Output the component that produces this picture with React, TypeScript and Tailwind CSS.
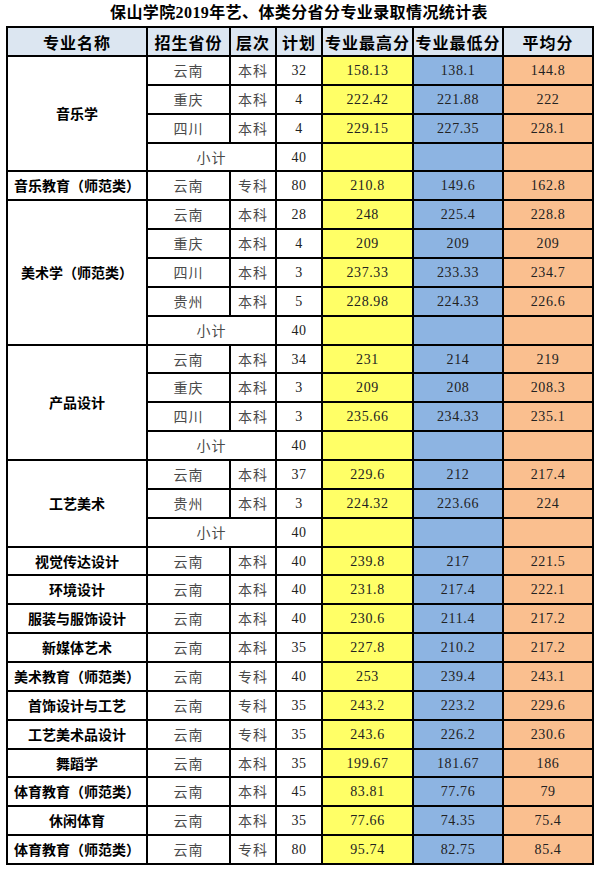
import React from "react"

type Row = { prov: string; level: string; plan: string; max: string; min: string; avg: string }
type Group = { name: string; rows: Row[]; subtotal?: string }

const r = (prov: string, level: string, plan: string, max: string, min: string, avg: string): Row => ({
  prov,
  level,
  plan,
  max,
  min,
  avg,
})

const groups: Group[] = [
  {
    name: "音乐学",
    rows: [
      r("云南", "本科", "32", "158.13", "138.1", "144.8"),
      r("重庆", "本科", "4", "222.42", "221.88", "222"),
      r("四川", "本科", "4", "229.15", "227.35", "228.1"),
    ],
    subtotal: "40",
  },
  { name: "音乐教育（师范类）", rows: [r("云南", "专科", "80", "210.8", "149.6", "162.8")] },
  {
    name: "美术学（师范类）",
    rows: [
      r("云南", "本科", "28", "248", "225.4", "228.8"),
      r("重庆", "本科", "4", "209", "209", "209"),
      r("四川", "本科", "3", "237.33", "233.33", "234.7"),
      r("贵州", "本科", "5", "228.98", "224.33", "226.6"),
    ],
    subtotal: "40",
  },
  {
    name: "产品设计",
    rows: [
      r("云南", "本科", "34", "231", "214", "219"),
      r("重庆", "本科", "3", "209", "208", "208.3"),
      r("四川", "本科", "3", "235.66", "234.33", "235.1"),
    ],
    subtotal: "40",
  },
  {
    name: "工艺美术",
    rows: [
      r("云南", "本科", "37", "229.6", "212", "217.4"),
      r("贵州", "本科", "3", "224.32", "223.66", "224"),
    ],
    subtotal: "40",
  },
  { name: "视觉传达设计", rows: [r("云南", "本科", "40", "239.8", "217", "221.5")] },
  { name: "环境设计", rows: [r("云南", "本科", "40", "231.8", "217.4", "222.1")] },
  { name: "服装与服饰设计", rows: [r("云南", "本科", "40", "230.6", "211.4", "217.2")] },
  { name: "新媒体艺术", rows: [r("云南", "本科", "35", "227.8", "210.2", "217.2")] },
  { name: "美术教育（师范类）", rows: [r("云南", "专科", "40", "253", "239.4", "243.1")] },
  { name: "首饰设计与工艺", rows: [r("云南", "专科", "35", "243.2", "223.2", "229.6")] },
  { name: "工艺美术品设计", rows: [r("云南", "专科", "35", "243.6", "226.2", "230.6")] },
  { name: "舞蹈学", rows: [r("云南", "本科", "35", "199.67", "181.67", "186")] },
  { name: "体育教育（师范类）", rows: [r("云南", "本科", "45", "83.81", "77.76", "79")] },
  { name: "休闲体育", rows: [r("云南", "本科", "35", "77.66", "74.35", "75.4")] },
  { name: "体育教育（师范类）", rows: [r("云南", "专科", "80", "95.74", "82.75", "85.4")] },
]

const spanClass: Record<number, string> = {
  1: "row-span-1",
  2: "row-span-2",
  3: "row-span-3",
  4: "row-span-4",
  5: "row-span-5",
}

const cell = "flex items-center justify-center"
const cjk = "font-['Noto_Sans_CJK_SC',sans-serif] text-[14px] tracking-[1px] text-[#4a4a4a]"
const num = "font-['Liberation_Serif','Noto_Sans_CJK_SC',serif] text-[14px] tracking-[0.6px] text-[#222]"

const headers = ["专业名称", "招生省份", "层次", "计划", "专业最高分", "专业最低分", "平均分"]

export default function App() {
  return (
    <div className="w-[598px] h-[872px] bg-white">
      <div className="h-[26px] flex items-center justify-center font-['Liberation_Serif','Noto_Sans_CJK_SC',serif] font-bold text-[16px] tracking-[0.4px] text-black">
        保山学院2019年艺、体类分省分专业录取情况统计表
      </div>
      <div className="ml-[6px] w-[588px] bg-black p-[2px] grid gap-[2px] grid-cols-[138px_81px_44px_44px_89px_88px_88px] grid-rows-[27px_repeat(28,26.86px)]">
        {headers.map((h) => (
          <div
            key={h}
            className={`${cell} bg-[#dce6f1] font-['Noto_Sans_CJK_SC',sans-serif] font-bold text-[16px] tracking-[1px] text-black`}
          >
            {h}
          </div>
        ))}
        {groups.map((g, gi) => {
          const span = g.rows.length + (g.subtotal ? 1 : 0)
          return (
            <React.Fragment key={gi}>
              <div
                className={`${cell} ${spanClass[span]} bg-white font-['Noto_Sans_CJK_SC',sans-serif] font-bold text-[14px] text-black`}
              >
                {g.name}
              </div>
              {g.rows.map((row, ri) => (
                <React.Fragment key={ri}>
                  <div className={`${cell} bg-white ${cjk}`}>{row.prov}</div>
                  <div className={`${cell} bg-white ${cjk}`}>{row.level}</div>
                  <div className={`${cell} bg-white ${num}`}>{row.plan}</div>
                  <div className={`${cell} bg-[#ffff66] ${num}`}>{row.max}</div>
                  <div className={`${cell} bg-[#8db4e2] ${num}`}>{row.min}</div>
                  <div className={`${cell} bg-[#fabf8f] ${num}`}>{row.avg}</div>
                </React.Fragment>
              ))}
              {g.subtotal && (
                <>
                  <div className={`${cell} col-span-2 bg-white ${cjk}`}>小计</div>
                  <div className={`${cell} bg-white ${num}`}>{g.subtotal}</div>
                  <div className="bg-[#ffff66]" />
                  <div className="bg-[#8db4e2]" />
                  <div className="bg-[#fabf8f]" />
                </>
              )}
            </React.Fragment>
          )
        })}
      </div>
    </div>
  )
}
